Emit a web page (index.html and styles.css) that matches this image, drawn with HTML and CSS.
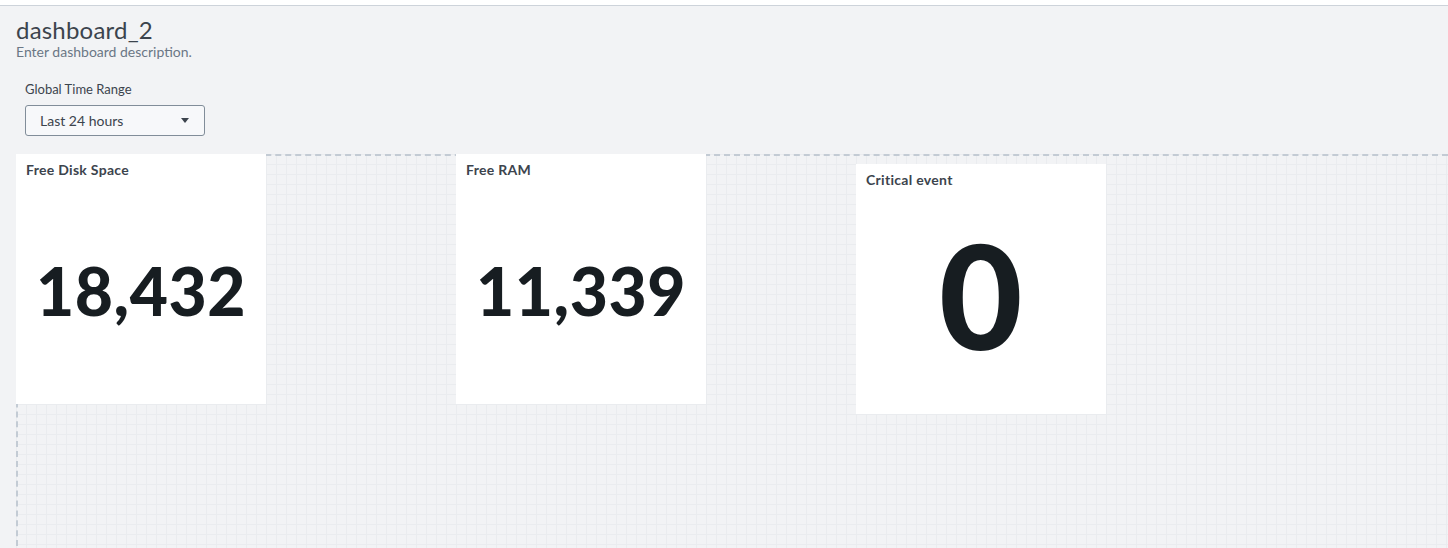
FILE: index.html
```html
<!DOCTYPE html>
<html>
<head>
<meta charset="utf-8">
<link rel="stylesheet" href="styles.css">
</head>
<body>
<div class="topbar"></div>
<div class="page">
  <header class="head">
    <h1 class="title">dashboard_2</h1>
    <p class="desc">Enter dashboard description.</p>
  </header>
  <div class="inputs">
    <label class="input-label">Global Time Range</label>
    <button class="dropdown">
      <span>Last 24 hours</span>
      <svg class="caret" width="8" height="5" viewBox="0 0 8 5"><path d="M0 0h8L4 5z" fill="#3c444d"/></svg>
    </button>
  </div>
  <div class="canvas">
    <div class="panel p1">
      <div class="panel-title">Free Disk Space</div>
      <div class="panel-body"><span class="value">18,432</span></div>
    </div>
    <div class="panel p2">
      <div class="panel-title">Free RAM</div>
      <div class="panel-body"><span class="value">11,339</span></div>
    </div>
    <div class="panel p3">
      <div class="panel-title">Critical event</div>
      <div class="panel-body"><span class="value big">0</span></div>
    </div>
  </div>
</div>
</body>
</html>
```

FILE: styles.css
```css
html, body {
  margin: 0;
  padding: 0;
  height: 100%;
  overflow: hidden;
}
body {
  background: #f2f3f5;
  font-family: Lato, "Open Sans", "Liberation Sans", sans-serif;
  color: #3c444d;
}
.topbar {
  height: 5px;
  background: #ffffff;
  border-bottom: 1px solid #cdd3da;
}
.page {
  padding: 0 0 0 16px;
}
.head {
  padding-top: 12px;
}
.title {
  margin: 0;
  font-size: 24px;
  font-weight: 400;
  line-height: 24px;
  color: #3c444d;
  letter-spacing: 0.2px;
}
.desc {
  margin: 2px 0 0;
  font-size: 14px;
  line-height: 16px;
  color: #6b7785;
}
.inputs {
  padding: 21px 0 0 9px;
  display: flex;
  flex-direction: column;
  align-items: flex-start;
}
.input-label {
  font-size: 13px;
  line-height: 16px;
  color: #3c444d;
}
.dropdown {
  margin-top: 8px;
  width: 180px;
  height: 31px;
  box-sizing: border-box;
  border: 1px solid #818d99;
  border-radius: 3px;
  background: #f7f8fa;
  display: flex;
  align-items: center;
  justify-content: space-between;
  padding: 0 15px 0 14px;
  font-family: inherit;
  font-size: 14px;
  color: #3c444d;
}
.canvas {
  position: relative;
  margin-top: 18px;
  height: 400px;
  border-top: 2px dashed #c3cbd4;
  border-left: 2px dashed #c3cbd4;
  background-color: #f2f3f5;
  background-image:
    linear-gradient(to right, #eaecef 1px, transparent 1px),
    linear-gradient(to bottom, #eaecef 1px, transparent 1px);
  background-size: 10px 10px;
  background-position: -2px -2px;
}
.panel {
  position: absolute;
  width: 250px;
  height: 250px;
  background: #ffffff;
  display: flex;
  flex-direction: column;
}
.p1 { left: -2px; top: -2px; }
.p2 { left: 438px; top: -2px; }
.p3 { left: 838px; top: 8px; }
.panel-title {
  padding: 8px 10px 0;
  font-size: 14px;
  font-weight: 700;
  line-height: 16px;
  letter-spacing: 0.3px;
  color: #3c444d;
}
.panel-body {
  flex: 1;
  display: flex;
  align-items: center;
  justify-content: center;
}
.value {
  font-size: 66px;
  font-weight: 900;
  color: #171d21;
  line-height: 1;
  letter-spacing: 0.5px;
}
.value.big {
  font-size: 144px;
  margin-top: -12px;
}
```
